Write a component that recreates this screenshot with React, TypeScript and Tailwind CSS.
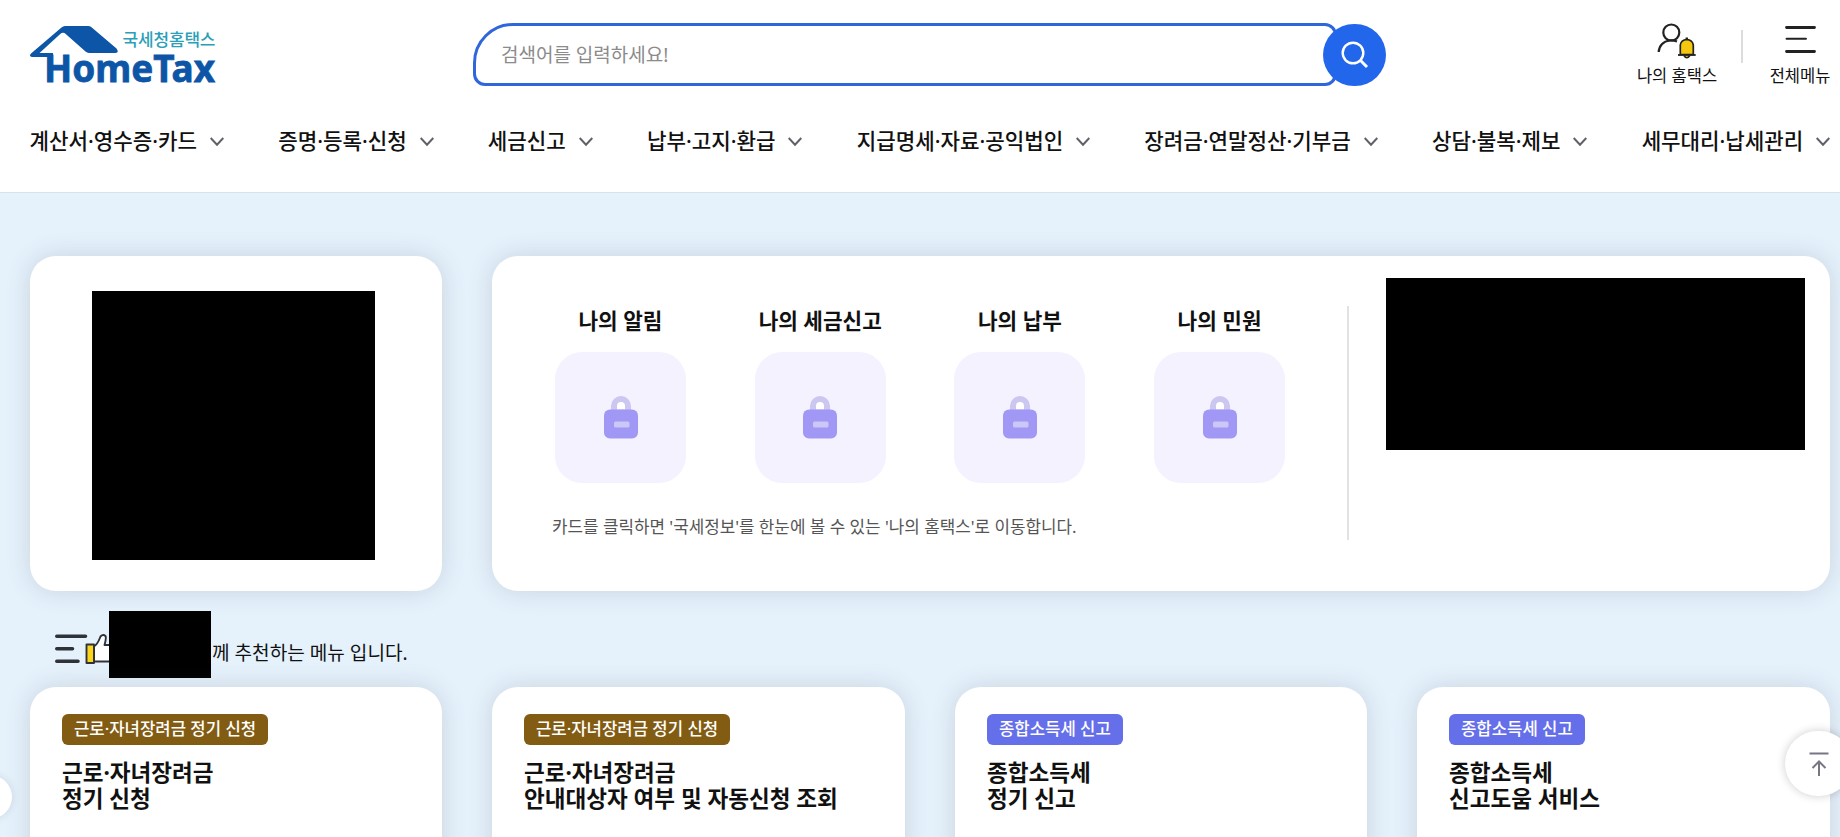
const navItems: string[] = [
  "계산서·영수증·카드",
  "증명·등록·신청",
  "세금신고",
  "납부·고지·환급",
  "지급명세·자료·공익법인",
  "장려금·연말정산·기부금",
  "상담·불복·제보",
  "세무대리·납세관리",
];

const myCards: string[] = ["나의 알림", "나의 세금신고", "나의 납부", "나의 민원"];

type Recommended = { badge: string; tone: "brown" | "indigo"; lines: [string, string] };

const recommended: Recommended[] = [
  { badge: "근로·자녀장려금 정기 신청", tone: "brown", lines: ["근로·자녀장려금", "정기 신청"] },
  { badge: "근로·자녀장려금 정기 신청", tone: "brown", lines: ["근로·자녀장려금", "안내대상자 여부 및 자동신청 조회"] },
  { badge: "종합소득세 신고", tone: "indigo", lines: ["종합소득세", "정기 신고"] },
  { badge: "종합소득세 신고", tone: "indigo", lines: ["종합소득세", "신고도움 서비스"] },
];

const cardShadow = "shadow-[0_0_24px_rgba(85,80,95,0.2)]";
const cardGrid = "grid grid-cols-[412px_413px_412px_413px] gap-x-[50px]";

function Logo() {
  return (
    <svg width="190" height="74" viewBox="0 0 190 74" className="block shrink-0" aria-label="국세청 홈택스">
      <path
        d="M31.5 4.5 Q33 3 35 3 H58 Q60 3 61.5 4.3 L86.5 25.5 Q89.5 30 85.5 30 H59 Q57 30 55.5 28.6 L36 11.2 Q33 8.5 30 11.2 L9.5 30 H23 V34 H2 Q-1.5 33.500 1 30.500 Z"
        fill="#0d55a6"
      />
      <text x="92.500" y="22.500" textLength="93" fontSize="17" fontWeight="500" fill="#2b9fb8" fontFamily="'Noto Sans CJK KR', sans-serif">
        국세청홈택스
      </text>
      <text
        x="14"
        y="58.500"
        textLength="171"
        lengthAdjust="spacingAndGlyphs"
        fontSize="38.300"
        fontWeight="700"
        fill="#0d55a6"
        stroke="#0d55a6"
        strokeWidth="0.800"
        fontFamily="'Noto Sans', sans-serif"
      >
        HomeTax
      </text>
    </svg>
  );
}

function Chevron() {
  return (
    <svg width="14" height="10" viewBox="0 0 14 10" fill="none" stroke="#5f6068" strokeWidth="2" className="ml-[13px] mt-[3px] shrink-0">
      <path d="M0.700 1 L7 7.700 L13.300 1" />
    </svg>
  );
}

function PersonBell() {
  return (
    <svg width="40" height="38" viewBox="0 0 40 38" fill="none" stroke="#222" strokeWidth="2.200">
      <circle cx="14.300" cy="9.500" r="8" />
      <path d="M1.700 29 C2 23 6 18 13 17.500 Q17 17.300 20 18.500" />
      <path d="M23.300 31.500 V22 Q24 17 29.800 16.500 Q35.500 17 36.300 22 V31.500 Z" fill="#f5c70f" strokeWidth="1.700" />
      <path d="M29.800 14.500 V17" strokeWidth="2.500" />
      <path d="M27 32.500 Q29.800 37 32.800 32.500" fill="#f5c70f" strokeWidth="1.700" />
      <path d="M21 32 H38.700" strokeWidth="1.800" />
    </svg>
  );
}

function Lock() {
  return (
    <svg width="34" height="43" viewBox="0 0 34 43">
      <path d="M7 16 V10 A10 10 0 0 1 27 10 V16 Z" fill="#cbc7f1" />
      <path d="M13 13.500 V10 A4 4 0 0 1 21 10 V13.500 Z" fill="#fff" />
      <rect x="0" y="13.500" width="34" height="29" rx="6" fill="#a197f5" />
      <rect x="10" y="25.500" width="15.500" height="6" rx="1.500" fill="#cbc7f7" />
    </svg>
  );
}

function ThumbList() {
  return (
    <svg width="60" height="32" viewBox="0 0 60 32" fill="none" stroke="#2f3238" strokeLinecap="round" strokeLinejoin="round">
      <path d="M1.800 3.200 H30.500 M1.800 15.700 H17.500 M1.800 28.200 H23" strokeWidth="3.600" />
      <path d="M39 13.500 C43 11 44 7 45.500 3.500 Q48 0.800 50.500 3 Q51.500 5 49.500 12 H60 V28.500 H39 Z" fill="#fff" strokeWidth="1.900" />
      <rect x="31.500" y="11.500" width="7.500" height="18.500" fill="#fad51c" strokeWidth="1.900" />
    </svg>
  );
}

export default function App() {
  return (
    <div className="relative flex h-[837px] w-full flex-col overflow-hidden bg-[#e5f2fc] font-['Noto_Sans','Noto_Sans_CJK_KR',sans-serif] text-[#111]">
      <header className="flex h-[193px] shrink-0 flex-col border-b border-[#d9e2ea] bg-white">
        <div className="flex h-[102px] items-start pl-[30px]">
          <div className="w-[443px] pt-[23px]">
            <Logo />
          </div>
          <div className="mt-[23px] flex items-start">
            <div className="flex h-[63px] w-[864px] items-center rounded-[12px] rounded-tl-[40px] border-[3px] border-[#2f66dc] pl-[25px]">
              <span className="pt-[2px] text-[19px] leading-none text-[#8b8b8b]">검색어를 입력하세요!</span>
            </div>
            <button className="mt-px -ml-[14px] flex h-[62px] w-[63px] items-center justify-center rounded-full bg-[#2266eb]">
              <svg width="28" height="28" viewBox="0 0 28 28" fill="none" stroke="#fff" strokeWidth="2.400">
                <circle cx="12" cy="12" r="10.300" />
                <path d="M19.300 19.300 L26 26" strokeWidth="3" />
              </svg>
            </button>
          </div>
          <div className="ml-auto flex pr-[8px]">
            <div className="flex w-[84px] flex-col items-center pt-[23px]">
              <PersonBell />
              <span className="mt-[7px] whitespace-nowrap text-[16.5px] leading-4">나의 홈택스</span>
            </div>
            <div className="mt-[30px] ml-[22px] h-[33px] w-[2px] bg-[#dcdcdc]" />
            <div className="ml-[25px] flex w-[64px] flex-col items-center pt-[25px]">
              <svg width="32" height="28" viewBox="0 0 32 28" fill="none" stroke="#222" strokeLinecap="round" className="ml-[2px]">
                <path d="M1.500 2.500 H29.500 M1.500 26.500 H29.500" strokeWidth="2.800" />
                <path d="M1.500 13.800 H21" strokeWidth="1.900" />
              </svg>
              <span className="mt-[15px] whitespace-nowrap text-[16.5px] leading-4">전체메뉴</span>
            </div>
          </div>
        </div>
        <nav className="flex h-[78px] items-center gap-[54.200px] pl-[29.500px]">
          {navItems.map((item) => (
            <a key={item} className="flex shrink-0 items-center whitespace-nowrap text-[21.200px] font-medium leading-none">
              {item}
              <Chevron />
            </a>
          ))}
        </nav>
      </header>

      <main className="flex flex-col px-[30px] pr-[10px] pt-[63px]">
        <div className={cardGrid}>
          <section className={`h-[335px] rounded-[26px] bg-white pt-[35px] pl-[62px] ${cardShadow}`}>
            <div className="h-[269px] w-[283px] bg-black" />
          </section>
          <section className={`col-span-3 flex h-[335px] rounded-[26px] bg-white ${cardShadow}`}>
            <div className="w-[855px] pt-[49px] pl-[60px]">
              <div className="flex gap-[48.700px] pl-[3px]">
                {myCards.map((title) => (
                  <div key={title} className="mr-[10px] -ml-[10px] flex w-[151px] flex-col items-center">
                    <h3 className="whitespace-nowrap text-[21.300px] font-bold leading-8">{title}</h3>
                    <div className="mt-[15px] flex h-[131px] w-[131px] items-center justify-center rounded-[27px] bg-[#f4f2ff]">
                      <Lock />
                    </div>
                  </div>
                ))}
              </div>
              <p className="mt-[32px] whitespace-nowrap text-[16.860px] leading-6 text-[#555]">
                카드를 클릭하면 '국세정보'를 한눈에 볼 수 있는 '나의 홈택스'로 이동합니다.
              </p>
            </div>
            <div className="mt-[50px] h-[234px] w-[2px] bg-[#e2e2e2]" />
            <div className="pt-[22px] pl-[37px]">
              <div className="h-[172px] w-[419px] bg-black" />
            </div>
          </section>
        </div>

        <div className="mt-[20px] flex h-[76px] items-start pl-[25px]">
          <div className="w-[54px] overflow-hidden pt-[22px]">
            <ThumbList />
          </div>
          <div className="h-[67px] w-[102px] shrink-0 bg-black" />
          <p className="ml-px mt-[30px] whitespace-nowrap text-[19.100px] leading-6">께 추천하는 메뉴 입니다.</p>
        </div>

        <div className={cardGrid}>
          {recommended.map((card, i) => (
            <article key={i} className={`flex h-[240px] flex-col items-start rounded-[26px] bg-white px-8 pt-[27px] ${cardShadow}`}>
              <span
                className={`flex h-[31px] items-center whitespace-nowrap rounded-[6px] px-[12px] text-[16.700px] font-medium leading-none text-white ${
                  card.tone === "brown" ? "bg-[#825c13]" : "bg-[#656fe9]"
                }`}
              >
                {card.badge}
              </span>
              <h3 className="mt-[15px] whitespace-nowrap text-[22.550px] font-bold leading-[26px]">
                <span className="block">{card.lines[0]}</span>
                <span className="block">{card.lines[1]}</span>
              </h3>
            </article>
          ))}
        </div>
      </main>

      <button className="absolute top-[775px] -left-[32px] h-[44px] w-[44px] rounded-full bg-white shadow-[0_0_8px_rgba(0,0,0,0.12)]" />
      <button className="absolute top-[731px] left-[1785px] flex h-[65px] w-[67px] items-center justify-center rounded-full bg-white shadow-[0_0_10px_rgba(0,0,0,0.2)]">
        <svg width="20" height="24" viewBox="0 0 20 24" fill="none" stroke="#777784" strokeWidth="2">
          <path d="M0.500 1.500 H19.500 M10 24 V9.500 M3.500 16 L10 9.500 L16.500 16" />
        </svg>
      </button>
    </div>
  );
}
